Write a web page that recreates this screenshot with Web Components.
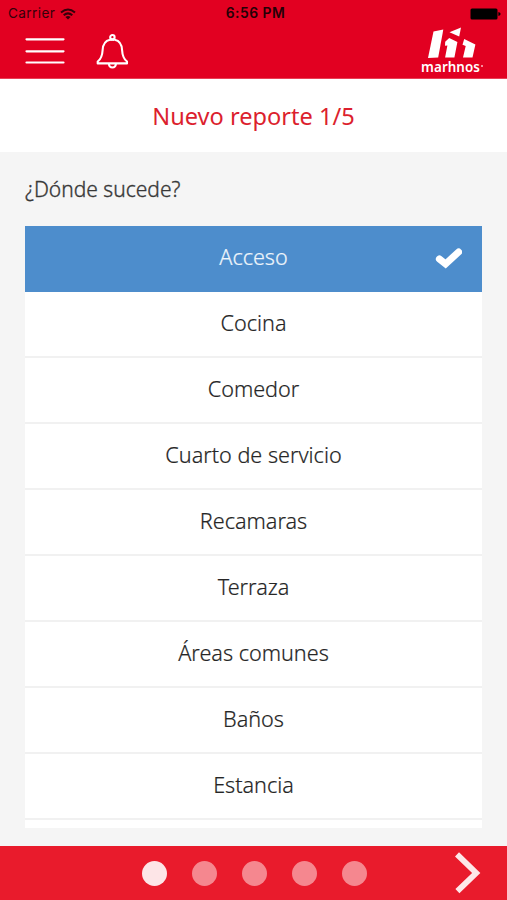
<!DOCTYPE html>
<html lang="es">
<head>
<meta charset="utf-8">
<title>Nuevo reporte</title>
<style>
  html, body {
    margin: 0;
    height: 100%;
    overflow: hidden;
    background: #f5f5f5;
    font-family: "Noto Sans", "Open Sans", sans-serif;
  }
</style>
</head>
<body>
<report-app></report-app>

<script>
// Barra de estado del telefono
class StatusBar extends HTMLElement {
  constructor() {
    super();
    this.attachShadow({ mode: 'open' });
    this.shadowRoot.innerHTML = `
      <style>
        :host {
          display: grid;
          grid-template-columns: 1fr auto 1fr;
          align-items: center;
          height: 27px;
          padding: 0 6px 0 8px;
          box-sizing: border-box;
          font: 13.6px/27px Inter, "Liberation Sans", sans-serif;
          color: #35000a;
        }
        .left { display: flex; align-items: center; gap: 5px; letter-spacing: 0.4px; }
        .time { font-weight: 600; font-size: 13.9px; letter-spacing: 0.5px; color: #250006; padding-left: 2px; }
        .battery { justify-self: end; }
        svg { display: block; }
      </style>
      <div class="left">
        <span>Carrier</span>
        <svg width="16" height="12" viewBox="0 0 16 12" fill="none" stroke="#35000a" stroke-width="2">
          <path d="M1 4.6Q8-1.7 15 4.6M3.7 7.3Q8 3.5 12.3 7.3"/>
          <path d="M5.4 8.9Q8 7 10.6 8.9L8 11.6z" fill="#35000a" stroke="none"/>
        </svg>
      </div>
      <span class="time">6:56 PM</span>
      <svg class="battery" width="31" height="12" viewBox="0 0 31 12">
        <rect x="0.5" y="0.5" width="27" height="11" rx="1.5" fill="#000"/>
        <path d="M28.4 4Q30.6 4.3 30.6 6T28.4 8z" fill="#000"/>
      </svg>
    `;
  }
}
customElements.define('status-bar', StatusBar);

class BrandLogo extends HTMLElement {
  constructor() {
    super();
    this.attachShadow({ mode: 'open' });
    this.shadowRoot.innerHTML = `
      <style>
        :host { display: flex; flex-direction: column; align-items: center; width: 62px; color: #fff; }
        svg { display: block; }
        .name { display: flex; font-size: 13.4px; font-weight: 600; line-height: 17px; letter-spacing: 0.05px; }
        i { width: 2px; height: 2px; margin: 6px 0 0 1px; border-radius: 50%; background: #ffb9c3; }
      </style>
      <svg width="48" height="32" viewBox="0 0 48 32" fill="#fff">
        <path d="M5.5 4.4L15.3 2.4 10.2 30.6 0 31z"/>
        <path d="M21.5 5.3L33 0.6 31.2 9.4z"/>
        <path d="M17.2 14.8L21.2 11 29.4 15 26.4 30.6H17.1L19.4 18.5 17 18.8z"/>
        <path d="M36.2 12L47.4 17.4 44.5 30.6H35L37.7 18.9 34.5 17.8z"/>
      </svg>
      <div class="name"><span>marhnos</span><i></i></div>
    `;
  }
}
customElements.define('brand-logo', BrandLogo);

class AppHeader extends HTMLElement {
  constructor() {
    super();
    this.attachShadow({ mode: 'open' });
    this.shadowRoot.innerHTML = `
      <style>
        :host { display: block; height: 79px; background: #e20021; box-sizing: border-box; border-bottom: 1px solid #e84055; }
        .tools { display: flex; align-items: flex-start; padding: 0 24px 0 25px; }
        .menu { margin-top: 10px; }
        .bell { margin: 6px auto 0 31px; }
        svg { display: block; }
      </style>
      <status-bar></status-bar>
      <div class="tools">
        <svg class="menu" width="40" height="28" viewBox="0 0 40 28" stroke="#fff" stroke-width="2.2" stroke-linecap="round">
          <path d="M1.5 2.3H38.5M1.5 14.3H38.5M1.5 25.5H38.5"/>
        </svg>
        <svg class="bell" width="33" height="37" viewBox="0 0 33 37" fill="none" stroke="#fff" stroke-width="2.1" stroke-linejoin="round">
          <path d="M14 6.7C9 7.8 6.8 11.8 6.6 17.2 6.3 23 5 26 1.7 28.5V30.4H31V28.5C27.7 26 26.4 23 26.1 17.2 25.9 11.8 23.7 7.8 18.7 6.7"/>
          <path d="M14 6.9Q16.4 6.3 18.7 6.9"/>
          <circle cx="16.4" cy="4.2" r="2.2"/>
          <path d="M12.9 31Q13.2 34.5 16.4 34.5T19.9 31"/>
        </svg>
        <brand-logo></brand-logo>
      </div>
    `;
  }
}
customElements.define('app-header', AppHeader);

// Fila de la lista; el atributo "selected" la pinta de azul
class PlaceOption extends HTMLElement {
  constructor() {
    super();
    this.attachShadow({ mode: 'open' });
    this.shadowRoot.innerHTML = `
      <style>
        :host {
          display: grid;
          grid-template-columns: 48px 1fr 48px;
          align-items: center;
          flex: none;
          height: 66px;
          padding-bottom: 2px;
          box-sizing: border-box;
          border-bottom: 2px solid #f1f1f1;
          background: #fff;
          color: #262626;
          font-size: 21.6px;
          font-weight: 300;
          -webkit-text-stroke: 0.2px currentColor;
        }
        :host([selected]) { background: #4d8dcc; border-color: #4d8dcc; color: #eef5fb; }
        .label { grid-column: 2; text-align: center; white-space: nowrap; line-height: 28px; }
        svg { display: none; }
        :host([selected]) svg { display: block; margin-top: 1px; }
      </style>
      <span class="label"><slot></slot></span>
      <svg width="28" height="24" viewBox="0 0 28 24" fill="none" stroke="#fff" stroke-width="7" stroke-linecap="round" stroke-linejoin="miter">
        <path d="M5.4 13L11.6 18 24.6 6"/>
      </svg>
    `;
  }
}
customElements.define('place-option', PlaceOption);

class StepFooter extends HTMLElement {
  constructor() {
    super();
    this.attachShadow({ mode: 'open' });
    const total = Number(this.getAttribute('total')) || 5;
    let dots = '';
    for (let i = 0; i < total; i++) {
      dots += `<span class="dot${i === 0 ? ' active' : ''}"></span>`;
    }
    this.shadowRoot.innerHTML = `
      <style>
        :host { display: grid; grid-template-columns: 1fr auto 1fr; align-items: center; height: 54px; background: #e91b2c; }
        .dots { grid-column: 2; display: flex; gap: 25px; padding-left: 1px; }
        .dot { width: 25px; height: 25px; border-radius: 50%; background: #f5878f; }
        .dot.active { background: #fde5e7; }
        svg { display: block; justify-self: end; margin-right: 26px; }
      </style>
      <div class="dots">${dots}</div>
      <svg width="26" height="42" viewBox="0 0 26 42" fill="none" stroke="#fde8e9" stroke-width="5.8">
        <path d="M2 2.4L21.2 21 2.4 39.2"/>
      </svg>
    `;
  }
}
customElements.define('step-footer', StepFooter);

class ReportApp extends HTMLElement {
  constructor() {
    super();
    this.attachShadow({ mode: 'open' });
    this.shadowRoot.innerHTML = `
      <style>
        :host { display: flex; flex-direction: column; height: 900px; background: #f5f5f5; }
        app-header, step-footer { flex: none; }
        h1 {
          margin: 0;
          height: 73px;
          background: #fff;
          color: #dc1f2e;
          font-size: 23.6px;
          font-weight: 400;
          line-height: 75px;
          text-align: center;
        }
        main { flex: 1; min-height: 0; display: flex; flex-direction: column; padding: 0 25px 18px; }
        h2 {
          margin: 0;
          height: 74px;
          color: #383838;
          font-size: 21px;
          font-weight: 300;
          line-height: 74px;
          -webkit-text-stroke: 0.35px currentColor;
        }
        .list { flex: 1; min-height: 0; overflow: hidden; display: flex; flex-direction: column; background: #fff; }
      </style>
      <app-header></app-header>
      <h1><span>Nuevo reporte 1/5</span></h1>
      <main>
        <h2><span>¿Dónde sucede?</span></h2>
        <div class="list">
          <place-option selected>Acceso</place-option>
          <place-option>Cocina</place-option>
          <place-option>Comedor</place-option>
          <place-option>Cuarto de servicio</place-option>
          <place-option>Recamaras</place-option>
          <place-option>Terraza</place-option>
          <place-option>Áreas comunes</place-option>
          <place-option>Baños</place-option>
          <place-option>Estancia</place-option>
        </div>
      </main>
      <step-footer total="5"></step-footer>
    `;
  }
}
customElements.define('report-app', ReportApp);
</script>
</body>
</html>
